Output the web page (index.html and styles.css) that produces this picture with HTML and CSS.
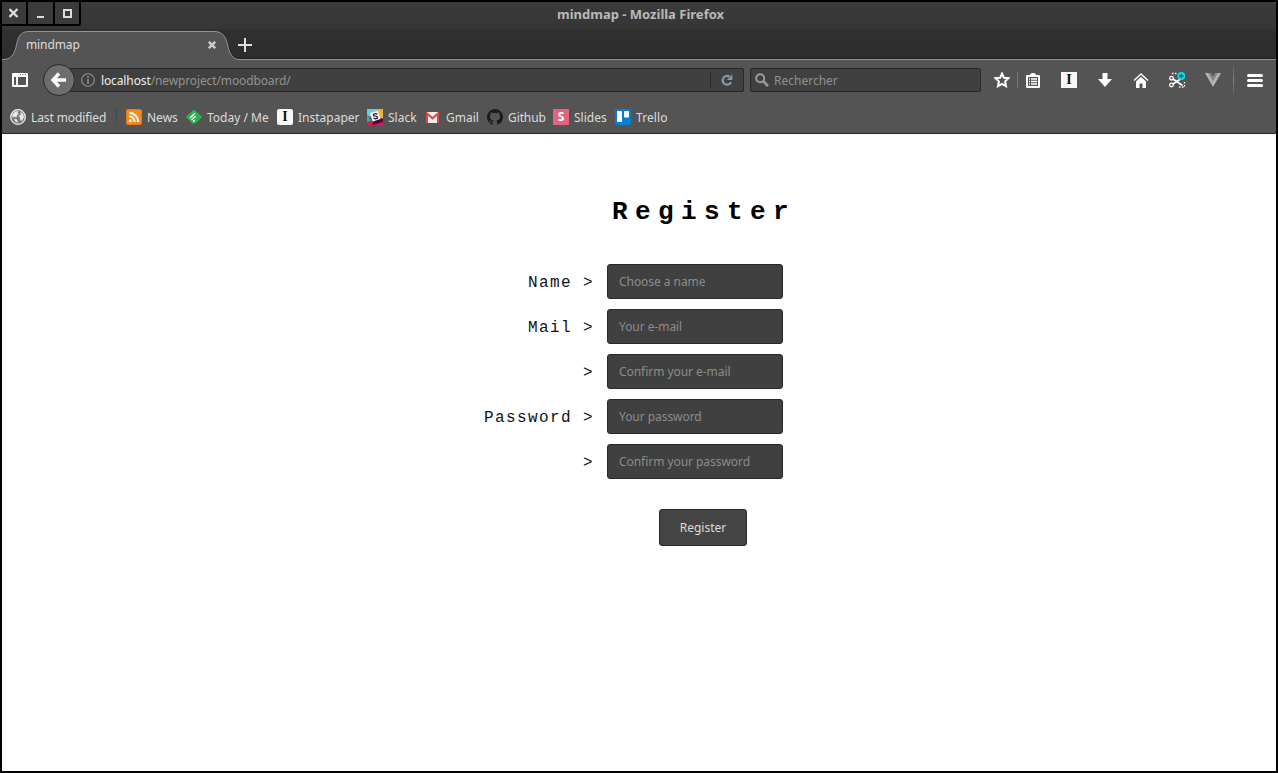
FILE: index.html
```html
<!DOCTYPE html>
<html lang="en">
<head>
<meta charset="utf-8">
<title>mindmap</title>
<link rel="stylesheet" href="styles.css">
</head>
<body>
<div class="window">
  <header class="titlebar">
    <div class="controls">
      <span class="control"><svg width="10" height="10" viewBox="0 0 10 10"><path d="M.5 1l8 8M8.500 1l-8 8" stroke="#ddd" stroke-width="2.300"/></svg></span>
      <span class="control"><svg width="10" height="10" viewBox="0 0 10 10"><path d="M1 9h7" stroke="#ddd" stroke-width="2"/></svg></span>
      <span class="control"><svg width="10" height="10" viewBox="0 0 10 10"><path d="M2 2h7v7H2z" fill="none" stroke="#ddd" stroke-width="2"/></svg></span>
    </div>
    <div class="title">mindmap - Mozilla Firefox</div>
  </header>

  <div class="tabstrip">
    <div class="tab">
      <svg class="tab-shape" width="240" height="31" viewBox="0 0 240 31"><path d="M0 31V30.5C9 30.5 12 26 14 18C16 8 18 2.500 27 2.500H212C221 2.500 224 8 226 18C228 26 231 30.500 238 30.500V31z" fill="#545454"/><path d="M0 30.500C9 30.500 12 26 14 18C16 8 18 2.500 27 2.500H212C221 2.500 224 8 226 18C228 26 231 30.500 238 30.500" fill="none" stroke="#90969a"/></svg>
      <span class="tab-title">mindmap</span>
      <svg class="tab-close" width="8" height="8" viewBox="0 0 8 8"><path d="M.8.8l6.400 6.400M7.200.8L.8 7.200" stroke="#ccc" stroke-width="2.400"/></svg>
    </div>
    <svg class="new-tab" width="14" height="14" viewBox="0 0 14 14"><path d="M7 0v14M0 7h14" stroke="#e4dddd" stroke-width="2"/></svg>
  </div>

  <nav class="navbar">
    <svg class="sidebar-icon" width="16" height="14" viewBox="0 0 16 14"><path fill="#fff" fill-rule="evenodd" d="M1 0h14q1 0 1 1v12q0 1-1 1H1q-1 0-1-1V1q0-1 1-1zM2 4v8h2V4zM6 4v8h8V4zM8 1v1h1V1zM10.500 1v1h1V1zM13 1v1h1V1z"/></svg>
    <span class="back"><svg width="18" height="16" viewBox="0 0 18 16"><path d="M9 1.500L3 8l6 6.500M3.500 8H16" fill="none" stroke="#fff" stroke-width="3.400"/></svg></span>
    <div class="urlbar">
      <svg width="14" height="14" viewBox="0 0 14 14"><circle cx="7" cy="7" r="6.300" fill="none" stroke="#929292" stroke-width="1.100"/><path d="M7 6v5M7 3v1.800" stroke="#929292" stroke-width="1.600"/></svg>
      <span class="url"><b class="host">localhost</b>/newproject/moodboard/</span>
      <span class="reload"><svg width="12" height="12" viewBox="0 0 12 12"><path d="M10 8.200A4.400 4.400 0 1 1 8.500 2.600" fill="none" stroke="#8799a8" stroke-width="2.200"/><path d="M11.300 .3V6H5.800z" fill="#8799a8"/></svg></span>
    </div>
    <div class="searchbar">
      <svg width="14" height="14" viewBox="0 0 14 14"><circle cx="5.200" cy="5.200" r="4" fill="none" stroke="#9b9b9b" stroke-width="2"/><path d="M8 8l5 5" stroke="#9b9b9b" stroke-width="2.500"/></svg>
      <span class="nudge">Rechercher</span>
    </div>
    <div class="tools">
      <svg class="star" width="16" height="16" viewBox="0 0 16 16"><path d="M8 1.500l1.900 4.200 4.600.5-3.400 3.100.9 4.900L8 11.900l-4 2.300.9-4.900L1.500 6.200l4.600-.5z" fill="none" stroke="#fff" stroke-width="2"/></svg>
      <span class="short-line"></span>
      <svg class="clip" width="14" height="15" viewBox="0 0 14 15"><path fill="#fff" fill-rule="evenodd" d="M4 2Q4 0 7 0t3 2h3q1 0 1 1v11q0 1-1 1H1q-1 0-1-1V3q0-1 1-1zM2 4v9h10V4z"/><path d="M3 6h1M5 6h6M3 8.500h1M5 8.500h6M3 11h1M5 11h6" stroke="#fff" stroke-width="1.300"/></svg>
      <span class="insta">I</span>
      <svg class="down" width="14" height="14" viewBox="0 0 14 14"><path d="M4.500 0h5v6H14l-7 8-7-8h4.500z" fill="#fff"/></svg>
      <svg class="home" width="16" height="15" viewBox="0 0 16 15"><path d="M1 7.500l7-6.500 7 6.500" fill="none" stroke="#fff" stroke-width="1.400"/><path d="M8 3.700l5 4.700V15H9.500v-4.500h-3V15H3V8.400z" fill="#fff"/></svg>
      <svg class="cut" width="17" height="16" viewBox="0 0 17 16"><path d="M3 1.500h6M15.500 10v5H10" fill="none" stroke="#fff" stroke-width="1.300" stroke-dasharray="1.500 1.500"/><circle cx="2.500" cy="6.200" r="1.800" fill="none" stroke="#fff" stroke-width="1.300"/><circle cx="2.500" cy="13" r="1.800" fill="none" stroke="#fff" stroke-width="1.300"/><path d="M4 7l9.500 6.500M4 12l7.500-5" stroke="#fff" stroke-width="1.700"/><circle cx="12.300" cy="4" r="3.900" fill="#10dce5"/><path d="M12.300 1.700v4.600M10 4h4.600" stroke="#34565b" stroke-width="1.300"/></svg>
      <svg class="vue" width="16" height="14" viewBox="0 0 16 14"><path d="M0 0h16L8 14z" fill="#b4b4b4"/><path d="M3.200 0h9.600L8 8.500z" fill="#858585"/><path d="M6 0h4L8 3.600z" fill="#545454"/></svg>
      <span class="tall-line"></span>
      <svg class="menu" width="16" height="13" viewBox="0 0 16 13"><path d="M1.500 1.500h13M1.500 6.500h13M1.500 11.500h13" stroke="#fff" stroke-width="3" stroke-linecap="round"/></svg>
    </div>
  </nav>

  <div class="bookmarks">
    <div class="bookmark last-modified"><svg width="16" height="16" viewBox="0 0 16 16"><circle cx="8" cy="8" r="7.300" fill="#777" stroke="#eee" stroke-width="1.300"/><path d="M2 6l3-3.500 3.500-.5-1 2L9 5 7 6l-.5 2.500L4 7.500 3 9zM10 3l3 1.500L14 8l-2 4-2-1V8.500L8.500 7 11 5.500zM4 9.500l3 1 1 3-2.500-.5z" fill="#e8e8e8"/></svg><span class="nudge">Last modified</span></div>
    <span class="bookmark-line"></span>
    <div class="bookmark news"><svg width="16" height="16" viewBox="0 0 16 16"><rect x=".5" y=".5" width="15" height="15" rx="1.500" fill="#f58a20" stroke="#e57a18"/><circle cx="4.300" cy="11.700" r="1.500" fill="#fff"/><path d="M3 7.300a5.700 5.700 0 0 1 5.700 5.700M3 3.800A9.200 9.200 0 0 1 12.200 13" fill="none" stroke="#fff" stroke-width="1.900"/></svg><span class="nudge">News</span></div>
    <div class="bookmark today"><svg width="16" height="16" viewBox="0 0 16 16"><path d="M8 1q.7 0 1.200.5l6 5.500q1 1 0 2l-5 5q-.5.500-1 .5H6.800q-.5 0-1-.5l-5-5q-1-1 0-2l6-5.500Q7.300 1 8 1z" fill="#2bb24c"/><path d="M4.500 8.500L8.500 4.800M6 10.500l3-2.800M7.500 12.300l.8-.8" stroke="#fff" stroke-width="1.500" stroke-linecap="round"/></svg><span class="nudge">Today / Me</span></div>
    <div class="bookmark instapaper"><span class="insta rounded">I</span><span class="nudge">Instapaper</span></div>
    <div class="bookmark slack"><svg width="16" height="16" viewBox="0 0 16 16"><path d="M0 0h10l1 5-8 3L0 6z" fill="#70cadb"/><path d="M10 0h6v10l-5-1z" fill="#e9b62f"/><path d="M0 5l4 7-4 2z" fill="#41b08c"/><path d="M0 13l12-3 4-1v7H0z" fill="#d91a60"/><path d="M5 14l7-5 4 1v3L6 16z" fill="#3c1235"/><path d="M3 4l8-2 2.500 8-8 2.500z" fill="#fff"/><path d="M10.400 5.300c-1-1.200-4-.8-4 .7 0 1.700 4.200.6 4.200 2.500 0 1.500-3 1.700-4.200.4" fill="none" stroke="#3c1235" stroke-width="1.400"/></svg><span class="nudge">Slack</span></div>
    <div class="bookmark gmail"><svg width="16" height="16" viewBox="0 0 16 16"><rect x="1" y="3" width="13" height="11" rx="1" fill="#f3efed"/><path d="M2 14V4.500L7.500 9.300 13 4.500V14" fill="none" stroke="#db4a3e" stroke-width="2"/></svg><span class="nudge">Gmail</span></div>
    <div class="bookmark github"><svg width="16" height="16" viewBox="0 0 16 16"><path fill="#1b1b1b" d="M8 0a8 8 0 0 0-2.530 15.590c.4.070.55-.17.550-.38v-1.490c-2.230.48-2.700-.95-2.700-.95-.36-.93-.89-1.170-.89-1.170-.73-.5.050-.49.050-.49.810.06 1.230.83 1.230.83.720 1.230 1.880.87 2.340.67.070-.52.280-.88.510-1.080-1.780-.2-3.640-.89-3.640-3.950 0-.87.310-1.590.82-2.150-.08-.2-.36-1.020.08-2.120 0 0 .67-.22 2.200.82a7.600 7.600 0 0 1 4 0c1.530-1.040 2.200-.82 2.200-.82.440 1.100.160 1.920.080 2.120.51.560.820 1.270.820 2.150 0 3.070-1.870 3.750-3.650 3.950.29.250.54.730.54 1.480v2.200c0 .21.150.46.550.38A8 8 0 0 0 8 0z"/></svg><span class="nudge">Github</span></div>
    <div class="bookmark slides"><span class="slides-icon">S</span><span class="nudge">Slides</span></div>
    <div class="bookmark trello"><svg width="16" height="16" viewBox="0 0 16 16"><rect width="16" height="16" rx="1.800" fill="#0282cd"/><rect x="2" y="2" width="5" height="11" rx=".7" fill="#fff"/><rect x="9" y="2" width="5" height="6.500" rx=".7" fill="#fff"/></svg><span class="nudge">Trello</span></div>
  </div>

  <main class="page">
    <h1 class="heading">Register</h1>
    <form class="form">
      <label class="row"><span class="label">Name &gt;</span><input class="field" placeholder="Choose a name"></label>
      <label class="row"><span class="label">Mail &gt;</span><input class="field" placeholder="Your e-mail"></label>
      <label class="row"><span class="label">&gt;</span><input class="field" placeholder="Confirm your e-mail"></label>
      <label class="row"><span class="label">Password &gt;</span><input class="field" placeholder="Your password"></label>
      <label class="row"><span class="label">&gt;</span><input class="field" placeholder="Confirm your password"></label>
      <button class="submit" type="button">Register</button>
    </form>
  </main>
</div>
</body>
</html>
```
FILE: styles.css
```css
* { box-sizing: border-box; }
body { margin: 0; background: #000; font: 12px/16px "Noto Sans", sans-serif; color: #ddd; }
svg { display: block; flex: none; }
.window { width: 1278px; height: 773px; border: 2px solid #000; display: flex; flex-direction: column; overflow: hidden; border-radius: 3px 3px 0 0; background: #fff; }

.titlebar { height: 27px; flex: none; display: flex; background: linear-gradient(#3b3b3b, #363636); }
.controls { display: flex; height: 24px; border-right: 2px solid #000; border-bottom: 2px solid #000; border-radius: 0 0 3px 0; background: #3b3b3b; }
.control { width: 26px; display: flex; align-items: center; justify-content: center; border-right: 2px solid #000; }
.control:nth-child(2) { width: 27px; }
.control:last-child { width: 24px; border: 0; }
.title { flex: 1; padding: 4px 0 0 476px; font-size: 13px; line-height: 17px; font-weight: 700; color: #bababa; white-space: nowrap; }

.tabstrip { height: 31px; flex: none; display: flex; background: linear-gradient(#303030, #2d2d2d 28px, #222 29px, #222 30px, #949494 30px); }
.tab { position: relative; width: 236px; height: 31px; display: flex; align-items: center; padding-left: 24px; }
.tab-shape { position: absolute; left: 0; top: 0; }
.tab-title { position: relative; width: 182px; letter-spacing: -.1px; }
.tab-close { position: relative; margin-top: 1px; }
.new-tab { position: relative; margin-top: 9px; }

.navbar { height: 40px; flex: none; display: flex; align-items: center; background: #545454; }
.sidebar-icon { margin-left: 10px; }
.back { position: relative; z-index: 1; width: 32px; height: 32px; flex: none; margin-left: 15px; border: 1px solid #292929; border-radius: 50%; background: #6d6d6d; display: flex; align-items: center; justify-content: center; }
.urlbar { width: 680px; height: 24px; flex: none; margin-left: -11px; padding-left: 16px; border: 1px solid #292929; border-radius: 2px; background: #404040; display: flex; align-items: center; }
.url { flex: 1; margin-left: 6px; padding-top: 2px; color: #929292; letter-spacing: -.12px; }
.host { font-weight: 400; color: #eee; }
.nudge { padding-top: 2px; }
.reload { width: 33px; height: 16px; border-left: 1px solid #292929; padding: 2px 0 0 10px; }
.searchbar { width: 231px; height: 24px; flex: none; margin-left: 6px; padding-left: 4px; border: 1px solid #292929; border-radius: 2px; background: #404040; color: #929292; display: flex; align-items: center; gap: 5px; }
.tools { display: flex; align-items: center; height: 40px; }
.star { margin-left: 13px; }
.short-line { width: 1px; height: 16px; margin-left: 7px; background: #777; }
.clip { margin-left: 8px; }
.insta { width: 16px; height: 16px; flex: none; background: #f8f8f8; color: #111; font: 700 14px/16px "Liberation Serif", serif; text-align: center; }
.tools .insta { margin-left: 21px; }
.down { margin-left: 21px; }
.home { margin-left: 21px; }
.cut { margin-left: 20px; }
.vue { margin-left: 19px; }
.tall-line { width: 1px; height: 38px; margin-left: 12px; background: linear-gradient(#545454, #808080, #545454); }
.menu { margin-left: 13px; }

.bookmarks { height: 34px; flex: none; display: flex; align-items: center; padding-left: 8px; background: #545454; border-bottom: 1px solid #292929; }
.bookmark { flex: none; display: flex; align-items: center; gap: 5px; white-space: nowrap; }
.last-modified { width: 106px; letter-spacing: -.1px; }
.bookmark-line { width: 1px; height: 18px; margin-right: 9px; background: #494949; }
.news { width: 60px; }
.today { width: 91px; }
.instapaper { width: 90px; }
.slack { width: 58px; }
.gmail { width: 62px; }
.github { width: 66px; letter-spacing: -.1px; }
.slides { width: 62px; }
.trello { letter-spacing: .1px; }
.rounded { border-radius: 2px; }
.slides-icon { width: 16px; height: 16px; background: #e4637c; color: #fff; font: 700 12px/16px "Open Sans", sans-serif; text-align: center; }

.page { flex: 1; background: #fff; color: #111; }
.heading { margin: 63px 0 0 610px; font: 700 26px/30px "Liberation Mono", monospace; letter-spacing: 7.4px; color: #000; }
.form { margin: 37px 0 0 405px; width: 376px; display: flex; flex-direction: column; gap: 10px; }
.row { height: 35px; display: flex; align-items: center; }
.label { width: 200px; padding: 2px 13px 0 0; text-align: right; white-space: pre; font: 16px/20px "Liberation Mono", monospace; letter-spacing: 1.4px; }
.field { width: 176px; height: 35px; padding: 0 11px; border: 1px solid #292929; border-radius: 3px; background: #404040; font: 12px/16px "Noto Sans", sans-serif; letter-spacing: -.05px; color: #ddd; outline: 0; }
.field::placeholder { color: #8c8c8c; opacity: 1; }
.submit { width: 88px; height: 37px; margin: 20px 0 0 252px; padding: 0; border: 1px solid #292929; border-radius: 3px; background: #444; font: 12px/16px "Noto Sans", sans-serif; color: #ddd; }
```
